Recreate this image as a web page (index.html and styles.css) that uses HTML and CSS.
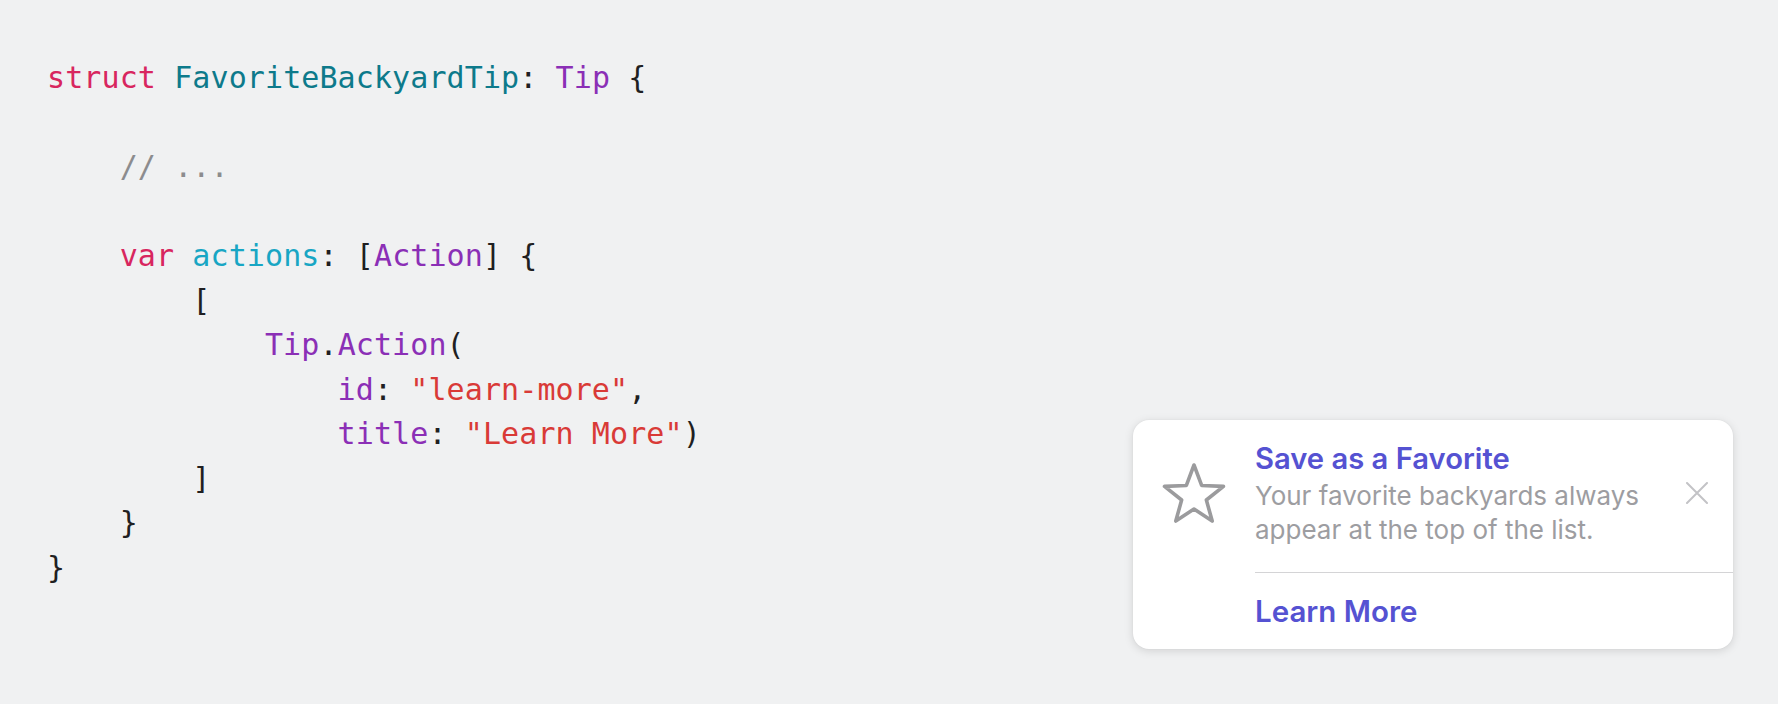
FILE: index.html
```html
<!DOCTYPE html>
<html>
<head>
<meta charset="utf-8">
<link rel="stylesheet" href="styles.css">
</head>
<body>
<div class="stage">
  <div class="code"><div class="line"><span class="kw">struct</span> <span class="ty">FavoriteBackyardTip</span>: <span class="tp">Tip</span> {</div><div class="line"> </div><div class="line">    <span class="cm">// ...</span></div><div class="line"> </div><div class="line">    <span class="kw">var</span> <span class="pr">actions</span>: [<span class="tp">Action</span>] {</div><div class="line">        [</div><div class="line">            <span class="tp">Tip</span>.<span class="tp">Action</span>(</div><div class="line">                <span class="tp">id</span>: <span class="st">"learn-more"</span>,</div><div class="line">                <span class="tp">title</span>: <span class="st">"Learn More"</span>)</div><div class="line">        ]</div><div class="line">    }</div><div class="line">}</div></div>

  <div class="tip">
    <div class="tip-icon">
      <svg width="66" height="62" viewBox="0 0 66 62" aria-hidden="true">
        <polygon points="33,4 40.64,24.48 62.48,25.42 45.36,39.02 51.22,60.08 33,48 14.78,60.08 20.64,39.02 3.52,25.42 25.36,24.48" fill="none" stroke="#9b9b9d" stroke-width="3.6" stroke-linejoin="round"/>
      </svg>
    </div>
    <div class="tip-main">
      <div class="tip-top">
        <div class="tip-text">
          <div class="tip-title">Save as a Favorite</div>
          <div class="tip-body">Your favorite backyards always appear at the top of the list.</div>
        </div>
        <div class="tip-close">
          <svg width="22" height="22" viewBox="0 0 22 22" aria-hidden="true">
            <path d="M1 1 L21 21 M21 1 L1 21" stroke="#c3c3c6" stroke-width="2" stroke-linecap="round"/>
          </svg>
        </div>
      </div>
      <div class="tip-action">Learn More</div>
    </div>
  </div>
</div>
</body>
</html>
```

FILE: styles.css
```css
html, body {
  margin: 0;
  padding: 0;
}

body {
  background: #f0f1f2;
  width: 1778px;
  height: 704px;
  overflow: hidden;
}

.stage {
  display: flex;
  justify-content: space-between;
  align-items: flex-start;
  padding: 56px 45px 0 47px;
}

.code {
  font-family: "DejaVu Sans Mono", "Liberation Mono", monospace;
  font-size: 30px;
  letter-spacing: 0.1px;
  line-height: 44.55px;
  color: #1f1f22;
  white-space: pre;
}

.kw { color: #d8265f; }
.ty { color: #0d7a8b; }
.tp { color: #8b2fb6; }
.pr { color: #18a6c4; }
.cm { color: #8c8c8e; }
.st { color: #d93a37; }

.tip {
  margin-top: 364px;
  width: 600px;
  height: 229px;
  box-sizing: border-box;
  background: #ffffff;
  border-radius: 16px;
  box-shadow: 0 2px 10px rgba(0, 0, 0, 0.13), 0 0 2px rgba(0, 0, 0, 0.06);
  display: flex;
  font-family: Inter, "Liberation Sans", sans-serif;
}

.tip-icon {
  padding: 41px 28px 0 28px;
}

.tip-icon svg {
  display: block;
}

.tip-main {
  flex: 1;
  display: flex;
  flex-direction: column;
}

.tip-top {
  display: flex;
  align-items: flex-start;
  padding: 21px 25px 25px 0;
  border-bottom: 1.5px solid #d4d4d6;
}

.tip-text {
  flex: 1;
}

.tip-title {
  font-size: 29.2px;
  line-height: 35px;
  font-weight: 600;
  color: #5552d2;
  margin-bottom: 3px;
}

.tip-body {
  font-size: 26px;
  line-height: 34px;
  color: #9d9da1;
}

.tip-close {
  padding-top: 41px;
}

.tip-close svg {
  display: block;
}

.tip-action {
  padding-top: 20px;
  font-size: 29.5px;
  line-height: 36px;
  font-weight: 600;
  color: #5552d2;
}
```
